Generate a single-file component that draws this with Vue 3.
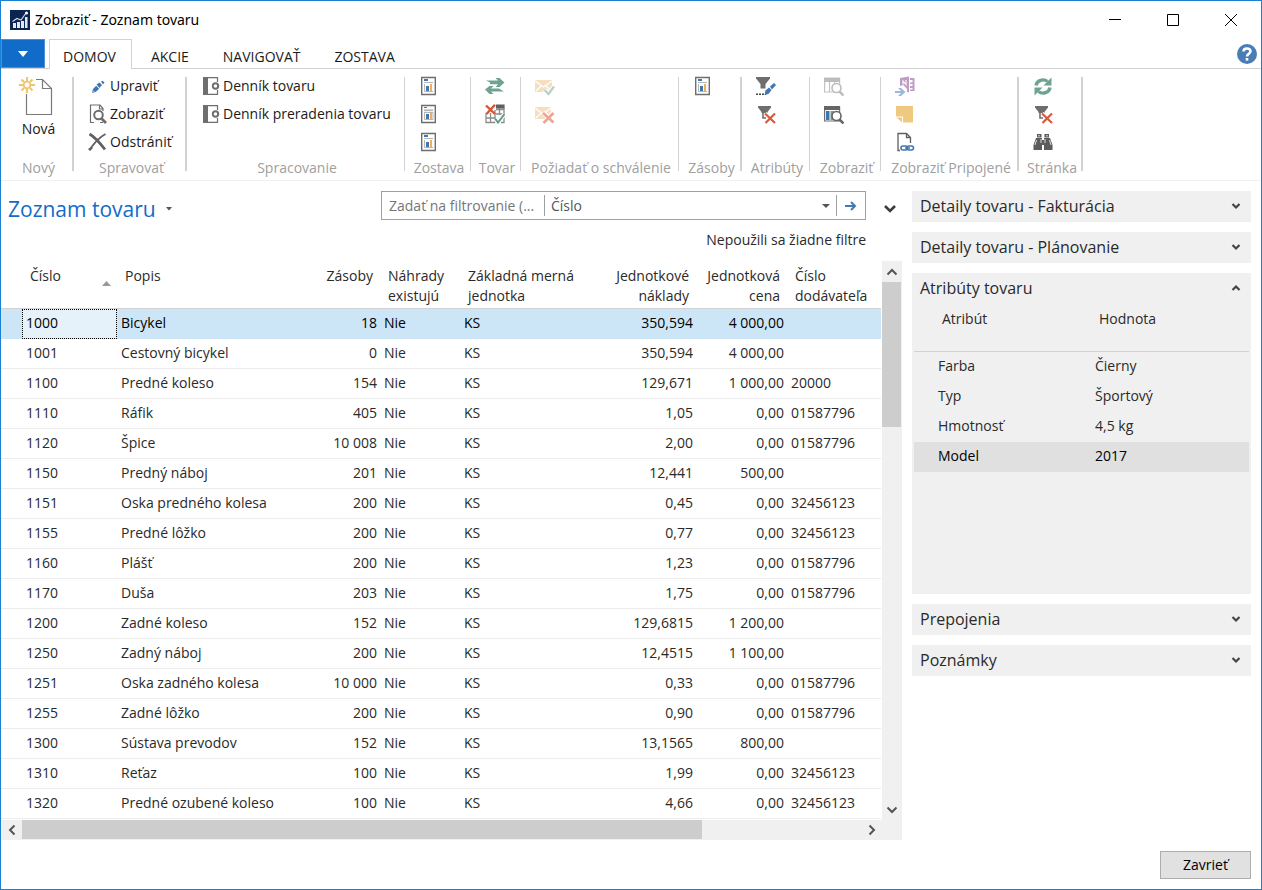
<script setup>
import { ref } from 'vue'

const tabs = ['DOMOV', 'AKCIE', 'NAVIGOVAŤ', 'ZOSTAVA']

const groups = [
  { name: 'Spravovať', size: 'w113', thick: true, items: [
    { icon: 'pencil', text: 'Upraviť' },
    { icon: 'view', text: 'Zobraziť' },
    { icon: 'delete', text: 'Odstrániť' }] },
  { name: 'Spracovanie', size: 'w218', items: [
    { icon: 'journal', text: 'Denník tovaru' },
    { icon: 'journal', text: 'Denník preradenia tovaru' }] },
  { name: 'Zostava', size: 'w66', items: [
    { icon: 'report', label: 'Zostava 1' },
    { icon: 'report-alt', label: 'Zostava 2' },
    { icon: 'report', label: 'Zostava 3' }] },
  { name: 'Tovar', size: 'w50', items: [
    { icon: 'swap', label: 'Presun' },
    { icon: 'calendar', label: 'Obdobie' }] },
  { name: 'Požiadať o schválenie', size: 'w158', items: [
    { icon: 'mail-ok', label: 'Odoslať žiadosť' },
    { icon: 'mail-no', label: 'Zrušiť žiadosť' }] },
  { name: 'Zásoby', size: 'w63', thick: true, items: [
    { icon: 'report', label: 'Zásoby' }] },
  { name: 'Atribúty', size: 'w68', items: [
    { icon: 'filter-edit', label: 'Filtrovať podľa atribútov' },
    { icon: 'filter-clear', label: 'Vymazať filter atribútov' }] },
  { name: 'Zobraziť', size: 'w71', items: [
    { icon: 'table-find-off', label: 'Zobraziť ako zoznam' },
    { icon: 'table-find', label: 'Zobraziť ako graf' }] },
  { name: 'Zobraziť Pripojené', size: 'w138', thick: true, items: [
    { icon: 'onenote', label: 'OneNote' },
    { icon: 'note', label: 'Poznámky' },
    { icon: 'link', label: 'Prepojenia' }] },
  { name: 'Stránka', size: 'w64', thick: true, items: [
    { icon: 'refresh', label: 'Obnoviť' },
    { icon: 'filter-clear', label: 'Vymazať filter' },
    { icon: 'binoculars', label: 'Hľadať' }] }
]

const items = [
  ['1000', 'Bicykel', '18', '350,594', '4 000,00', ''],
  ['1001', 'Cestovný bicykel', '0', '350,594', '4 000,00', ''],
  ['1100', 'Predné koleso', '154', '129,671', '1 000,00', '20000'],
  ['1110', 'Ráfik', '405', '1,05', '0,00', '01587796'],
  ['1120', 'Špice', '10 008', '2,00', '0,00', '01587796'],
  ['1150', 'Predný náboj', '201', '12,441', '500,00', ''],
  ['1151', 'Oska predného kolesa', '200', '0,45', '0,00', '32456123'],
  ['1155', 'Predné lôžko', '200', '0,77', '0,00', '32456123'],
  ['1160', 'Plášť', '200', '1,23', '0,00', '01587796'],
  ['1170', 'Duša', '203', '1,75', '0,00', '01587796'],
  ['1200', 'Zadné koleso', '152', '129,6815', '1 200,00', ''],
  ['1250', 'Zadný náboj', '200', '12,4515', '1 100,00', ''],
  ['1251', 'Oska zadného kolesa', '10 000', '0,33', '0,00', '01587796'],
  ['1255', 'Zadné lôžko', '200', '0,90', '0,00', '01587796'],
  ['1300', 'Sústava prevodov', '152', '13,1565', '800,00', ''],
  ['1310', 'Reťaz', '100', '1,99', '0,00', '32456123'],
  ['1320', 'Predné ozubené koleso', '100', '4,66', '0,00', '32456123']
]

const attributes = [
  ['Farba', 'Čierny'],
  ['Typ', 'Športový'],
  ['Hmotnosť', '4,5 kg'],
  ['Model', '2017']
]

const selected = ref(0)
const selectedAttribute = ref(3)
const query = ref('')
const field = ref('Číslo')
</script>

<template>
  <div class="window">
    <svg class="sprite" aria-hidden="true">
      <symbol id="pencil" viewBox="0 0 20 20">
        <path d="M4 17l1-4 3.200-3.200 3 3L8 15.800z" fill="#3f76b0" />
        <path d="M8.500 8.500l3-2 2.500 2.500-2.500 3z" fill="#3f76b0" />
        <path d="M13 5.500l1.500-.8 2 1.800-1.500 2z" fill="#3f76b0" />
        <path d="M4 17l1-3 1.800 1.800z" fill="#8fb0d3" />
      </symbol>
      <symbol id="view" viewBox="0 0 20 20">
        <path d="M6 18.500H2.500V1H12l3 3.500V7M11.500 1v4H15M12 18.500h3" fill="none" stroke="#6e6e6e" stroke-width="1.200" />
        <circle cx="10.500" cy="11" r="4.300" fill="#fff" stroke="#6e6e6e" stroke-width="2" />
        <path d="M13.500 14.500l4.500 4.500" stroke="#6e6e6e" stroke-width="2.800" />
      </symbol>
      <symbol id="delete" viewBox="0 0 20 20">
        <path d="M1.500 2C6 4.500 12 11 17 17.500" fill="none" stroke="#606060" stroke-width="2.800" />
        <path d="M17.500 2C12 5 6 11 1.500 18" fill="none" stroke="#606060" stroke-width="1.800" />
        <path d="M0 17l3-2 2 1-3 3z" fill="#606060" />
      </symbol>
      <symbol id="journal" viewBox="0 0 20 20">
        <path d="M2 1h5v18H2z" fill="#6e6e6e" />
        <path d="M7 1.600h9.500v16.800H7" fill="none" stroke="#6e6e6e" stroke-width="1.200" />
        <path d="M15.500 6h3v8h-3z" fill="#fff" />
        <circle cx="14.500" cy="10" r="2.700" fill="#fff" stroke="#6e6e6e" stroke-width="1.900" />
        <path d="M16 9.200h2.200v1.600H16z" fill="#6e6e6e" />
      </symbol>
      <symbol id="report" viewBox="0 0 20 20">
        <path d="M2.700 1.500h13.600v17H2.700z" fill="#fff" stroke="#6e6e6e" stroke-width="1.400" />
        <path d="M5 3h4v2H5z" fill="#3f76b0" />
        <path d="M5 6.500h9M5.500 8v7.500H14" fill="none" stroke="#b5b5b5" />
        <path d="M7 10h3v5H7z" fill="#3f76b0" />
        <path d="M11 8h2v7h-2z" fill="#efb05c" />
      </symbol>
      <symbol id="report-alt" viewBox="0 0 20 20">
        <path d="M2.700 1.500h13.600v17H2.700z" fill="#fff" stroke="#6e6e6e" stroke-width="1.400" />
        <path d="M5 3h3v1H5z" fill="#3f76b0" />
        <path d="M5 6.300h9" stroke="#b5b5b5" stroke-width="1.800" />
        <path d="M5.500 8v7.500H14V8.500H6" fill="none" stroke="#b5b5b5" />
        <path d="M7 10h3v5H7z" fill="#3f76b0" />
        <path d="M11 9h2v6h-2z" fill="#efb05c" />
      </symbol>
      <symbol id="swap" viewBox="0 0 20 20">
        <path d="M1 4.500h12L10.500 2h4l5 4.500-5 4.500h-4L13 8.300H5V6.500z" fill="#6fa390" />
        <path d="M19 15.500H6L8.500 18h-4L0 13.500 4.500 10h4L6 12.500h8z" fill="#6fa390" />
      </symbol>
      <symbol id="calendar" viewBox="0 0 20 20">
        <path d="M1 9v9.500h9M5.500 9v9M10 6v12.500M1 14h9M11 5.500h8M14.500 4v7M19 4v14.500h-3M11 10h8" fill="none" stroke="#8c8c8c" stroke-width="1.300" />
        <path d="M11 .5h8.600v4H11z" fill="#5f5f5f" />
        <path d="M1 1.500l9 8.500M10 .8L1.500 10" stroke="#da5433" stroke-width="2.400" />
        <path d="M10 14.500l3 4L19.500 10" fill="none" stroke="#fff" stroke-width="4" />
        <path d="M10 14.500l3 4L19.500 10" fill="none" stroke="#5b9e88" stroke-width="2" />
      </symbol>
      <symbol id="mail-ok" viewBox="0 0 20 20">
        <path d="M0 4h17v12H0z" fill="#f6dfbf" />
        <path d="M0 5l8.500 6L17 5M1 15l5-5M16 15l-5-5" fill="none" stroke="#fff" stroke-width="1.200" />
        <path d="M9.500 14l4 4L19 10.500" fill="none" stroke="#fff" stroke-width="4.500" />
        <path d="M9.500 14l4 4L19 10.500" fill="none" stroke="#b6d2c9" stroke-width="2.300" />
      </symbol>
      <symbol id="mail-no" viewBox="0 0 20 20">
        <path d="M0 3h16v12H0z" fill="#f6dfbf" />
        <path d="M0 4l8 6 8-6M1 14l5-5" fill="none" stroke="#fff" stroke-width="1.200" />
        <path d="M8 8.500l10.500 10M18.500 8.500L8.500 19" stroke="#fff" stroke-width="4.500" />
        <path d="M8 9l10.500 9.500M18.500 9L8.500 19" stroke="#eda895" stroke-width="2.800" />
      </symbol>
      <symbol id="filter-edit" viewBox="0 0 20 20">
        <path d="M0 1h14v1.500L9.500 8v4.500h-5V8L0 2.500z" fill="#6e6e6e" />
        <path d="M0 18.200h10" stroke="#444" stroke-width="1.600" stroke-dasharray="2 1" />
        <path d="M8.500 19l1-4.500 3.500-3 2.500 2.500L12.500 18z" fill="#3f76b0" />
        <path d="M14 10.500L18 7l2 2-4 4.500z" fill="#3f76b0" />
      </symbol>
      <symbol id="filter-clear" viewBox="0 0 20 20">
        <path d="M2 2h13v1.500L11.500 8v1h-6V8L2 3.500z" fill="#6e6e6e" />
        <path d="M7 8v6h3" fill="none" stroke="#6e6e6e" stroke-width="1.600" />
        <path d="M9 9.500L19 19M19 9.500L9 19" stroke="#fff" stroke-width="4" />
        <path d="M9 9.500L19 19M19 9.500L9.500 19" stroke="#d8583a" stroke-width="2.200" />
      </symbol>
      <symbol id="table-find-off" viewBox="0 0 20 20">
        <path d="M.6 2h15v14H.6zM5.500 6v10M10.500 6v10" fill="none" stroke="#c3c3c3" stroke-width="1.200" />
        <path d="M0 2h16v4H0z" fill="#bdbdbd" />
        <circle cx="12.500" cy="12" r="4.500" fill="#fff" stroke="#bdbdbd" stroke-width="1.600" />
        <path d="M15.500 15.500l4 4" stroke="#bdbdbd" stroke-width="2.500" />
      </symbol>
      <symbol id="table-find" viewBox="0 0 20 20">
        <path d="M.6 3h15v14H.6z" fill="#fff" stroke="#6e6e6e" stroke-width="1.200" />
        <path d="M0 2h16v4H0z" fill="#666" />
        <path d="M2 7h3.500v9H2z" fill="#3f76b0" />
        <path d="M6.500 7H10v9H6.500z" fill="#6fa390" />
        <circle cx="12.500" cy="12" r="4.500" fill="#fff" stroke="#666" stroke-width="1.600" />
        <path d="M15.500 15.500l4 4" stroke="#666" stroke-width="2.500" />
      </symbol>
      <symbol id="onenote" viewBox="0 0 20 20">
        <path d="M5 2l9-1.500v16L12 16v-3L8.500 9 5 10z" fill="#be9cc4" />
        <path d="M8 8.500V5l3 3.500V4" fill="none" stroke="#fff" stroke-width="1.100" />
        <path d="M15 2h4.500v13H15z" fill="#be9cc4" />
        <path d="M15 4h2.500v2.500H15zM15 8h2.500v2H15zM15 12h2.500v1.500H15z" fill="#fff" />
        <path d="M0 15h6l-3-3h3l4.500 4L6 20H3l3-3H0z" fill="#9bb9dc" />
      </symbol>
      <symbol id="note" viewBox="0 0 20 20">
        <path d="M1 2h17v16.500H8v-6H1z" fill="#eec97f" />
        <path d="M1.500 13.500H7v5z" fill="#eec97f" />
      </symbol>
      <symbol id="link" viewBox="0 0 20 20">
        <path d="M5 18.500H3V1.500h8.500l4 4V11M11.500 1.500v4h4" fill="none" stroke="#5f5f5f" stroke-width="1.300" />
        <rect x="6" y="14" width="6.500" height="4" rx="2" fill="#fff" stroke="#3f76b0" stroke-width="1.600" />
        <rect x="12" y="14" width="6.500" height="4" rx="2" fill="none" stroke="#3f76b0" stroke-width="1.600" />
        <path d="M10 16h5" stroke="#3f76b0" stroke-width="1.400" />
      </symbol>
      <symbol id="refresh" viewBox="0 0 20 20">
        <path d="M3 9.500A7 6.500 0 0 1 14.500 5.500" fill="none" stroke="#6fa390" stroke-width="3.400" />
        <path d="M18.500 1.500V9.500H10.500z" fill="#6fa390" />
        <path d="M17 11.500A7 6.500 0 0 1 5.500 15.500" fill="none" stroke="#6fa390" stroke-width="3.400" />
        <path d="M1.500 19.500V11.500H9.500z" fill="#6fa390" />
      </symbol>
      <symbol id="binoculars" viewBox="0 0 20 20">
        <path d="M4 2h4.500v3.500H4zM11.500 2H16v3.500h-4.500z" fill="#5c5c5c" />
        <path d="M3 6h6v12H.5v-5zM17 6h-6v12h8.500v-5z" fill="#5c5c5c" />
        <path d="M9 8h2v5H9z" fill="#5c5c5c" />
        <path d="M3.500 8L2 13M16.500 8L18 13M8 7v4M12 7v4" stroke="#fff" stroke-width=".8" />
        <path d="M5.500 3h1v1.500h-1zM13.500 3h1v1.500h-1z" fill="#fff" />
      </symbol>
      <symbol id="chevron" viewBox="0 0 10 8">
        <path d="M1.500 2L5 5.500 8.500 2" fill="none" stroke="#444" stroke-width="2.200" />
      </symbol>
      <symbol id="arrow" viewBox="0 0 12 12">
        <path d="M1.500 3.500L6 8l4.500-4.500" fill="none" stroke="#555" stroke-width="2" />
      </symbol>
    </svg>

    <header class="titlebar">
      <svg class="app-icon" viewBox="0 0 20 20" aria-hidden="true">
        <path d="M0 0h20v20H0z" fill="#0b2452" />
        <path d="M3 13h3v5H3zM7 12h3v6H7zM11 11h3v7h-3zM15 7h2.500v11H15z" fill="#e4e9f0" />
        <path d="M2.500 11.500L7 8.500l4 1.500 5-7" fill="none" stroke="#cdd6e4" stroke-width="1.200" />
        <circle cx="16.500" cy="3" r="1.500" fill="#fff" />
      </svg>
      <h1>Zobraziť - Zoznam tovaru</h1>
      <div class="window-buttons">
        <button type="button" aria-label="Minimalizovať"><svg viewBox="0 0 12 12"><path d="M0 5.500h12" /></svg></button>
        <button type="button" aria-label="Maximalizovať"><svg viewBox="0 0 12 12"><path d="M.5.5h11v11H.5z" /></svg></button>
        <button type="button" aria-label="Zavrieť okno"><svg viewBox="0 0 12 12"><path d="M0 0l12 12M12 0L0 12" /></svg></button>
      </div>
    </header>

    <nav class="tabs">
      <button type="button" class="app-menu" aria-label="Ponuka aplikácie">
        <svg viewBox="0 0 10 8"><path d="M0 1h10L5 7z" fill="#fff" /></svg>
      </button>
      <button v-for="(tab, i) in tabs" :key="tab" type="button" class="tab" :class="{ active: i === 0 }">{{ tab }}</button>
      <button type="button" class="help" aria-label="Pomocník">
        <svg viewBox="0 0 20 20">
          <circle cx="10" cy="10" r="10" fill="#4a7db5" />
          <path d="M6.500 7.500C6.500 3.500 13.500 3.500 13.500 7.300C13.500 9.800 10 9.800 10 12.500" fill="none" stroke="#fff" stroke-width="2.600" />
          <path d="M8.700 14h2.600v2.600H8.700z" fill="#fff" />
        </svg>
      </button>
    </nav>

    <section class="ribbon">
      <div class="group w73 thick">
        <button type="button" class="new">
          <svg viewBox="3 0 36 40" aria-hidden="true">
            <path d="M8.500 18v20.500h25V12.500l-9-9H18M24.500 3.500v9h9" fill="none" stroke="#7a7a7a" stroke-width="1.200" />
            <circle cx="9" cy="9" r="3.400" fill="none" stroke="#eec572" stroke-width="1.900" />
            <path d="M9 1v4M9 13v4M1 9h4M13 9h4M3.500 3.500l2.500 2.500M12 12l2.500 2.500M14.500 3.500L12 6M6 12l-2.500 2.500" stroke="#eec572" stroke-width="2.200" />
          </svg>
          Nová
        </button>
        <div class="caption">Nový</div>
      </div>
      <div v-for="g in groups" :key="g.name + g.size" class="group" :class="[g.size, { thick: g.thick }]">
        <div class="commands">
          <button v-for="(c, i) in g.items" :key="i" type="button" class="command" :aria-label="c.text || c.label">
            <svg class="icon" aria-hidden="true"><use :href="'#' + c.icon" /></svg>
            <span v-if="c.text">{{ c.text }}</span>
          </button>
        </div>
        <div class="caption">{{ g.name }}</div>
      </div>
    </section>

    <main class="body">
      <section class="list">
        <div class="list-head">
          <h2>
            <button type="button" class="page-title">Zoznam tovaru
              <svg viewBox="0 0 6 4" aria-hidden="true"><path d="M0 0h6L3 3.500z" fill="#555" /></svg>
            </button>
          </h2>
          <div class="filter-area">
            <form class="filter" @submit.prevent>
              <input v-model="query" type="text" aria-label="Filter" placeholder="Zadať na filtrovanie (...">
              <div class="field">
                <select v-model="field" aria-label="Pole filtra">
                  <option>Číslo</option>
                  <option>Popis</option>
                </select>
                <svg viewBox="0 0 8 4" aria-hidden="true"><path d="M0 0h8L4 4z" fill="#555" /></svg>
              </div>
              <button type="submit" aria-label="Použiť filter">
                <svg viewBox="0 0 12 10"><path d="M0 5h10M6 1l4 4-4 4" fill="none" stroke="#4179b5" stroke-width="2" /></svg>
              </button>
            </form>
            <p>Nepoužili sa žiadne filtre</p>
          </div>
          <button type="button" class="expand" aria-label="Rozbaliť filter">
            <svg viewBox="0 0 12 8"><path d="M1 1l5 5 5-5" fill="none" stroke="#3c3c3c" stroke-width="2.600" /></svg>
          </button>
        </div>

        <div class="grid">
          <div class="table-wrap">
            <table class="items">
              <colgroup>
                <col class="c-mark"><col class="c-no"><col><col class="c-stock"><col class="c-subst"><col class="c-unit"><col class="c-cost"><col class="c-price"><col class="c-vendor">
              </colgroup>
              <thead>
                <tr>
                  <th></th>
                  <th class="sorted"><div>Číslo<svg viewBox="0 0 9 5" aria-hidden="true"><path d="M0 5h9L4.500 0z" fill="#999" /></svg></div></th>
                  <th>Popis</th>
                  <th class="num">Zásoby</th>
                  <th>Náhrady<br>existujú</th>
                  <th>Základná merná<br>jednotka</th>
                  <th class="num">Jednotkové<br>náklady</th>
                  <th class="num">Jednotková<br>cena</th>
                  <th>Číslo<br>dodávateľa</th>
                </tr>
              </thead>
              <tbody>
                <tr v-for="(r, i) in items" :key="r[0]" :class="{ selected: i === selected }" @click="selected = i">
                  <td></td>
                  <td class="key">{{ r[0] }}</td>
                  <td>{{ r[1] }}</td>
                  <td class="num">{{ r[2] }}</td>
                  <td>Nie</td>
                  <td>KS</td>
                  <td class="num">{{ r[3] }}</td>
                  <td class="num">{{ r[4] }}</td>
                  <td>{{ r[5] }}</td>
                </tr>
              </tbody>
            </table>
          </div>
          <div class="vscroll">
            <button type="button" aria-label="Nahor"><svg class="up"><use href="#arrow" /></svg></button>
            <div class="vtrack"><div class="vthumb"></div></div>
            <button type="button" aria-label="Nadol"><svg><use href="#arrow" /></svg></button>
          </div>
          <div class="hscroll">
            <button type="button" aria-label="Doľava"><svg class="left"><use href="#arrow" /></svg></button>
            <div class="htrack"><div class="hthumb"></div></div>
            <button type="button" aria-label="Doprava"><svg class="right"><use href="#arrow" /></svg></button>
          </div>
          <div class="corner"></div>
        </div>
      </section>

      <aside class="facts">
        <section class="fact"><button type="button">Detaily tovaru - Fakturácia<svg><use href="#chevron" /></svg></button></section>
        <section class="fact"><button type="button">Detaily tovaru - Plánovanie<svg><use href="#chevron" /></svg></button></section>
        <section class="fact open">
          <button type="button">Atribúty tovaru<svg class="up"><use href="#chevron" /></svg></button>
          <table>
            <thead><tr><th>Atribút</th><th>Hodnota</th></tr></thead>
            <tbody>
              <tr v-for="(a, i) in attributes" :key="a[0]" :class="{ selected: i === selectedAttribute }" @click="selectedAttribute = i">
                <td>{{ a[0] }}</td><td>{{ a[1] }}</td>
              </tr>
            </tbody>
          </table>
        </section>
        <section class="fact"><button type="button">Prepojenia<svg><use href="#chevron" /></svg></button></section>
        <section class="fact"><button type="button">Poznámky<svg><use href="#chevron" /></svg></button></section>
      </aside>
    </main>

    <footer><button type="button" class="close">Zavrieť</button></footer>
  </div>
</template>

<style>
body { margin: 0; background: #fff; }
</style>

<style scoped>
.window {
  box-sizing: border-box;
  min-height: 100vh;
  display: flex;
  flex-direction: column;
  border: 1px solid #1a80d2;
  background: #fff;
  color: #2a2a2a;
  font: 14px/20px "Open Sans", "Noto Sans", sans-serif;
}
button, input, select { font: inherit; color: inherit; margin: 0; padding: 0; border: 0; background: none; }
h1, h2, p { margin: 0; font-weight: 400; }
svg { display: block; flex: none; }
.sprite { position: absolute; width: 0; height: 0; }

.titlebar { display: flex; align-items: center; height: 38px; padding-left: 9px; }
.app-icon { width: 20px; height: 20px; }
h1 { margin-left: 5px; font-family: "Noto Sans", "Open Sans", sans-serif; font-size: 14px; color: #000; }
.window-buttons { display: flex; margin-left: auto; margin-right: 1px; }
.window-buttons button { width: 58px; height: 36px; display: flex; align-items: center; justify-content: center; }
.window-buttons svg { width: 12px; height: 12px; fill: none; stroke: #000; stroke-width: 1; overflow: visible; }

.tabs { display: flex; height: 30px; box-sizing: border-box; border-bottom: 1px solid #d2d2d2; }
.app-menu { width: 44px; display: flex; justify-content: center; align-items: center; background: #106cc8; border: 1px solid #4a90d9; margin-right: 4px; }
.app-menu svg { width: 10px; height: 8px; }
.tab { height: 30px; padding: 5px 17px 0; color: #1a1a1a; white-space: nowrap; }
.tab.active { box-sizing: border-box; padding: 4px 15px 0 13px; border: 1px solid #d2d2d2; border-bottom: 0; background: #fff; margin-right: 2px; }
.help { margin-left: auto; margin-right: 4px; }
.help svg { width: 20px; height: 20px; }

.ribbon { display: flex; padding-top: 3px; border-bottom: 1px solid #f1f1f1; overflow: hidden; }
.group {
  box-sizing: border-box;
  flex: none;
  display: flex;
  flex-direction: column;
  height: 108px;
  background: linear-gradient(#d2d2d2, #d2d2d2) right 5px / 1px 94px no-repeat;
}
.group.thick { background-size: 2px 94px; }
.w50 { width: 50px; }
.w63 { width: 63px; }
.w64 { width: 64px; }
.w66 { width: 66px; }
.w68 { width: 68px; }
.w71 { width: 71px; }
.w73 { width: 73px; }
.w113 { width: 113px; }
.w138 { width: 138px; }
.w158 { width: 158px; }
.w218 { width: 218px; }
.commands { height: 84px; padding-left: 14px; }
.command { display: flex; align-items: center; gap: 2px; height: 28px; color: #1a1a1a; white-space: nowrap; }
.icon { width: 20px; height: 20px; }
.caption { height: 24px; padding-left: 2px; line-height: 24px; text-align: center; color: #a0a0a0; white-space: nowrap; }
.new { height: 84px; padding: 4px 0 0 2px; display: flex; flex-direction: column; align-items: center; gap: 3px; color: #1a1a1a; }
.new svg { width: 36px; height: 40px; overflow: visible; }

.body { display: flex; gap: 10px; padding: 10px 10px 0 0; }
.list { flex: 1; min-width: 0; }
.list-head { display: flex; height: 70px; }
h2 { flex: 1; }
.page-title { display: flex; align-items: center; gap: 10px; height: 36px; padding-left: 7px; font-size: 21px; color: #106cc8; white-space: nowrap; }
.page-title svg { width: 6px; height: 4px; }
.filter-area { width: 485px; }
.filter { box-sizing: border-box; display: flex; align-items: center; height: 29px; border: 1px solid #a0a0a0; color: #6a6a6a; }
.filter input { box-sizing: border-box; width: 163px; height: 21px; padding-left: 7px; border-right: 1px solid #a0a0a0; outline: 0; }
.filter input::placeholder { color: #767676; opacity: 1; }
.field { flex: 1; display: flex; align-items: center; border-right: 1px solid #a0a0a0; height: 21px; padding-right: 6px; }
.field select { flex: 1; appearance: none; padding-left: 6px; outline: 0; color: #555; }
.field svg { width: 8px; height: 4px; }
.filter button { width: 28px; display: flex; justify-content: center; }
.filter button svg { width: 12px; height: 10px; }
.filter-area p { margin-top: 10px; text-align: right; }
.expand { width: 36px; height: 36px; padding-left: 12px; display: flex; align-items: center; justify-content: center; }
.expand svg { width: 12px; height: 8px; }

.grid { display: grid; grid-template-columns: 1fr 20px; grid-template-rows: auto 20px; }
.table-wrap { padding: 0 1px 1px 0; overflow: hidden; }
table { border-collapse: separate; border-spacing: 0; table-layout: fixed; width: 100%; }
.c-mark { width: 21px; }
.c-no { width: 95px; }
.c-stock { width: 90px; }
.c-subst { width: 80px; }
.c-unit { width: 140px; }
.c-cost { width: 96px; }
.c-price { width: 91px; }
.c-vendor { width: 94px; }
th, td { text-align: left; font-weight: 400; white-space: nowrap; }
.items th { box-sizing: border-box; height: 48px; padding: 5px 0 2px 8px; vertical-align: top; border-bottom: 1px solid #d2d2d2; }
.items th.num { padding: 5px 7px 2px 0; }
.items td { box-sizing: border-box; height: 30px; padding: 0 0 2px 4px; border-bottom: 1px solid #ececec; }
.items td.num { padding: 0 3px 2px 0; }
.items .num { text-align: right; }
.sorted div { display: flex; justify-content: space-between; align-items: flex-end; padding: 0 6px 0 0; }
.sorted svg { width: 9px; height: 5px; }
.items tr.selected td { background: #cde6f7; border-bottom-color: #cde6f7; color: #000; }
.items tr.selected td.key { background: #e5f2fa; outline: 1px dotted #000; outline-offset: -1px; }

.vscroll, .hscroll, .corner { background: #f0f0f0; }
.vscroll { display: flex; flex-direction: column; }
.vscroll button, .hscroll button { width: 20px; height: 21px; display: flex; align-items: center; justify-content: center; }
.hscroll button { height: 20px; }
.vscroll svg, .hscroll svg { width: 12px; height: 12px; }
.up { transform: rotate(180deg); }
.left { transform: rotate(90deg); }
.right { transform: rotate(270deg); }
.vtrack { flex: 1; }
.vthumb { height: 28%; margin-right: 1px; background: #cdcdcd; }
.hscroll { display: flex; }
.hscroll button:first-child { width: 21px; }
.htrack { flex: 1; }
.hthumb { width: 81%; height: 19px; background: #cdcdcd; }

.facts { flex: 0 0 339px; display: flex; flex-direction: column; gap: 10px; }
.fact { background: #f0f0f0; }
.fact > button { box-sizing: border-box; width: 100%; height: 31px; padding: 0 10px 2px 8px; display: flex; align-items: center; justify-content: space-between; font-size: 16px; }
.fact > button svg { width: 10px; height: 8px; }
.fact.open { height: 321px; padding: 0 2px; box-sizing: border-box; }
.fact.open > button { padding: 0 8px 2px 6px; }
.fact th { box-sizing: border-box; height: 48px; padding: 5px 0 0 28px; vertical-align: top; border-bottom: 1px solid #d2d2d2; }
.fact th:first-child { width: 157px; box-sizing: border-box; }
.fact td { box-sizing: border-box; height: 30px; padding: 0 0 2px 24px; }
.fact tr.selected td { background: #e0e0e0; color: #000; }

footer { margin-top: auto; padding: 10px; display: flex; justify-content: flex-end; }
.close { box-sizing: border-box; width: 91px; height: 28px; border: 1px solid #adadad; background: #e1e1e1; color: #000; }
</style>
